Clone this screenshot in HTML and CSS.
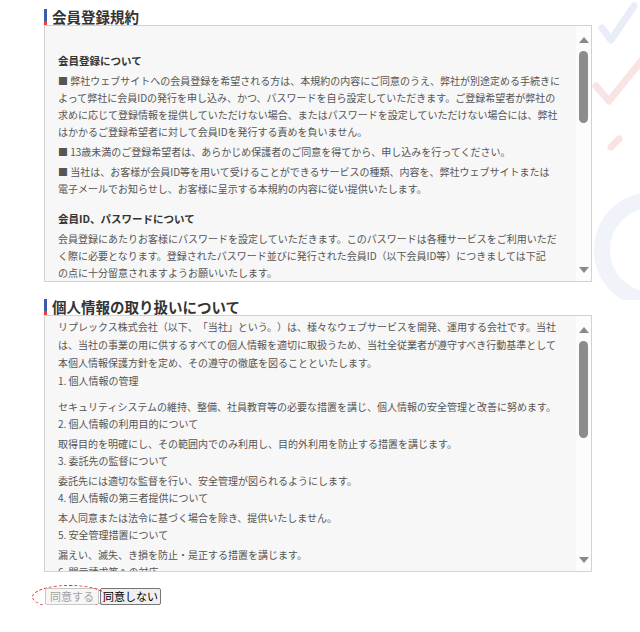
FILE: index.html
```html
<!DOCTYPE html>
<html lang="ja">
<head>
    <meta charset="UTF-8">
    <meta name="viewport" content="width=device-width, initial-scale=1.0">
    <title>会員登録規約</title>
    <link rel="stylesheet" href="styles.css">
</head>

<body>
    <!-- faint decoration behind the page -->
    <svg class="deco" width="60" height="300" viewBox="0 0 60 300">
        <polyline points="22,28 31,40 54,6" class="deco-blue"/>
        <polyline points="16,86 29,101 62,60" class="deco-red"/>
        <line x1="31" y1="147" x2="39" y2="139" class="deco-red"/>
        <circle cx="72" cy="250" r="50" class="deco-ring"/>
    </svg>

    <div class="container">
        <!-- Terms of membership -->
        <h2 class="section-title">会員登録規約</h2>
        <div class="scroll-box">
            <div class="scroll-text">
                <h3>会員登録について</h3>
                <p>■ 弊社ウェブサイトへの会員登録を希望される方は、本規約の内容にご同意のうえ、弊社が別途定める手続きに<br>よって弊社に会員IDの発行を申し込み、かつ、パスワードを自ら設定していただきます。ご登録希望者が弊社の<br>求めに応じて登録情報を提供していただけない場合、またはパスワードを設定していただけない場合には、弊社<br>はかかるご登録希望者に対して会員IDを発行する責めを負いません。</p>
                <p>■ 13歳未満のご登録希望者は、あらかじめ保護者のご同意を得てから、申し込みを行ってください。</p>
                <p>■ 当社は、お客様が会員ID等を用いて受けることができるサービスの種類、内容を、弊社ウェブサイトまたは<br>電子メールでお知らせし、お客様に呈示する本規約の内容に従い提供いたします。</p>
                <h3 class="next">会員ID、パスワードについて</h3>
                <p>会員登録にあたりお客様にパスワードを設定していただきます。このパスワードは各種サービスをご利用いただ<br>く際に必要となります。登録されたパスワード並びに発行された会員ID（以下会員ID等）につきましては下記<br>の点に十分留意されますようお願いいたします。</p>
                <p>■ 会員ID等は、お客様ご自身の責任において管理していただきます。</p>
            </div>
            <div class="scrollbar">
                <span class="arrow up"></span>
                <div class="track"><div class="thumb thumb-terms"></div></div>
                <span class="arrow down"></span>
            </div>
        </div>

        <!-- Privacy policy -->
        <h2 class="section-title second">個人情報の取り扱いについて</h2>
        <div class="scroll-box">
            <div class="scroll-text privacy">
                <p class="lead">リプレックス株式会社（以下、「当社」という。）は、様々なウェブサービスを開発、運用する会社です。当社<br>は、当社の事業の用に供するすべての個人情報を適切に取扱うため、当社全従業者が遵守すべき行動基準として<br>本個人情報保護方針を定め、その遵守の徹底を図ることといたします。<br>1. 個人情報の管理</p>
                <p>セキュリティシステムの維持、整備、社員教育等の必要な措置を講じ、個人情報の安全管理と改善に努めます。</p>
                <div class="item-title">2. 個人情報の利用目的について</div>
                <p>取得目的を明確にし、その範囲内でのみ利用し、目的外利用を防止する措置を講じます。</p>
                <div class="item-title">3. 委託先の監督について</div>
                <p>委託先には適切な監督を行い、安全管理が図られるようにします。</p>
                <div class="item-title">4. 個人情報の第三者提供について</div>
                <p>本人同意または法令に基づく場合を除き、提供いたしません。</p>
                <div class="item-title">5. 安全管理措置について</div>
                <p>漏えい、滅失、き損を防止・是正する措置を講じます。</p>
                <div class="item-title">6. 開示請求等への対応</div>
                <p>ご本人からの開示、訂正、利用停止等の請求には、適切かつ速やかに対応いたします。</p>
            </div>
            <div class="scrollbar">
                <span class="arrow up"></span>
                <div class="track"><div class="thumb thumb-privacy"></div></div>
                <span class="arrow down"></span>
            </div>
        </div>

        <!-- Agree / disagree -->
        <div class="buttons">
            <button type="button" disabled>同意する</button>
            <button type="button">同意しない</button>
            <span class="ring-mark"></span>
        </div>
    </div>
</body>

</html>
```

FILE: styles.css
```css
/* Page base */
body {
    margin: 0;
    font-family: "Noto Sans CJK JP", "Noto Sans", sans-serif;
    color: #555;
    background-color: #fff;
    position: relative;
    text-spacing-trim: space-all;
}

/* Faint shapes in the top right corner */
.deco {
    position: absolute;
    top: 0;
    left: 580px;
    z-index: -1;
    opacity: 0.8;
}

.deco polyline,
.deco line {
    fill: none;
    stroke-width: 7;
    stroke-linecap: round;
    stroke-linejoin: round;
}

.deco-blue {
    stroke: #e3e9f7;
}

.deco-red {
    stroke: #fadddd;
}

.deco-ring {
    fill: none;
    stroke: #edf1fa;
    stroke-width: 16;
}

.container {
    width: 548px;
    padding: 9px 0 0 44px;
}

/* Section headings with the blue/red bar */
.section-title {
    margin: 0;
    padding-left: 5px;
    font-size: 14.5px;
    line-height: 16px;
    font-weight: bold;
    color: #333;
    border-left: 3px solid #3f5aa8;
    border-image: linear-gradient(#3f5aa8 0, #3f5aa8 72%, #e5413d 72%) 1;
}

.section-title.second {
    margin-top: 17px;
}

/* Bordered text boxes */
.scroll-box {
    display: flex;
    height: 257px;
    box-sizing: border-box;
    border: 1px solid #d2d2d2;
    background-color: #f7f7f7;
}

.scroll-text {
    flex: 1;
    overflow: hidden;
    padding: 26px 0 0 13px;
    font-size: 10px;
    line-height: 17px;
}

.scroll-text h3 {
    margin: 0 0 3px;
    font-size: 10.5px;
    line-height: 17px;
    color: #333;
}

.scroll-text h3.next {
    margin-top: 13px;
}

.scroll-text p {
    margin: 0 0 3px;
}

/* Privacy text sits closer to the top */
.scroll-text.privacy {
    padding-top: 2px;
}

.scroll-text.privacy .lead {
    line-height: 18px;
    margin-bottom: 8px;
}

.scroll-text.privacy p {
    margin-bottom: 0;
}

.item-title {
    margin-bottom: 3px;
}

/* Drawn scrollbar */
.scrollbar {
    width: 15px;
    box-sizing: border-box;
    padding: 11px 0 8px;
    display: flex;
    flex-direction: column;
    align-items: center;
    background-color: #fcfcfc;
}

.arrow {
    width: 0;
    height: 0;
    border-left: 5px solid transparent;
    border-right: 5px solid transparent;
}

.arrow.up {
    border-bottom: 6px solid #8a8a8a;
}

.arrow.down {
    border-top: 6px solid #8a8a8a;
}

.track {
    flex: 1;
    width: 9px;
}

.thumb {
    margin-top: 8px;
    width: 9px;
    border-radius: 5px;
    background-color: #8c8c8c;
}

.thumb-terms {
    height: 72px;
}

.thumb-privacy {
    height: 97px;
}

/* Buttons under the boxes */
.buttons {
    position: relative;
    display: flex;
    gap: 1px;
    margin-top: 16px;
    padding-left: 1px;
}

button {
    font-family: inherit;
    font-size: 11px;
    line-height: 13px;
    padding: 1px 2px;
    border: 1px solid #767676;
    border-radius: 2px;
    background-color: #f0f0f0;
    color: #000;
}

button:disabled {
    padding: 1px 4px;
    color: #a3a3a3;
    border-color: #c8c8c8;
    background-color: #f6f6f6;
}

/* Red dashed ellipse around the first button */
.ring-mark {
    position: absolute;
    left: -12px;
    top: -3px;
    width: 75px;
    height: 24px;
    box-sizing: border-box;
    border: 1px dashed #e02626;
    border-radius: 50%;
}
```
